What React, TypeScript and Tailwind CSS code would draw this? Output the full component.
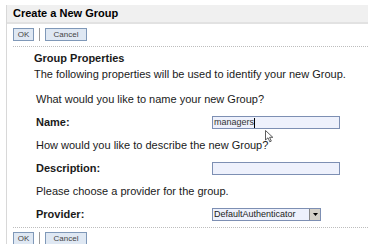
import React from "react";

function Btn({ label, w }: { label: string; w: string }) {
  return (
    <button className={`${w} h-[13px] border border-[#7f98b8] bg-[#dfe8f3] text-[8px] leading-[11px] text-[#444] font-['Liberation_Sans',sans-serif]`}>
      {label}
    </button>
  );
}

function Buttons() {
  return (
    <div className="flex items-center gap-[5px]">
      <Btn label="OK" w="w-[21px]" />
      <div className="w-px h-[13px] bg-[#9a9a9a]" />
      <Btn label="Cancel" w="w-[42px]" />
    </div>
  );
}

export default function App() {
  return (
    <div className="w-[368px] h-[244px] bg-white overflow-hidden font-['Liberation_Sans',sans-serif] text-[11px] text-[#1a1a1a] pt-[5px]">
      <div className="ml-[6px] border-l border-[#d8d8d8] h-full">
        <div className="h-[19px] bg-[#f0f0f0] border-b-2 border-[#e2e2e2] flex items-center pl-[6px] font-bold text-[11px] text-black">
          Create a New Group
        </div>
        <div className="pl-[6px] pt-[4px]">
          <Buttons />
        </div>
        <div className="ml-[6px] mt-[5px] border-t border-dotted border-[#bdbdbd]" />
        <div className="pl-[27px] pt-[3px]">
          <div className="font-bold h-[16px] leading-[16px]">Group Properties</div>
          <div className="h-[16px] leading-[16px]">The following properties will be used to identify your new Group.</div>
          <div className="pl-[2px] pt-[6px]">
            <div className="h-[23px] leading-[23px]">What would you like to name your new Group?</div>
            <div className="flex items-center h-[23px]">
              <div className="w-[176px] font-bold">Name:</div>
              <div className="relative">
                <div className="w-[128px] h-[13px] border border-[#7d8fb3] bg-[#eef1fc] text-[9px] leading-[11px] pl-[1px] text-[#333]">
                  managers<span className="inline-block w-px h-[10px] bg-black align-middle" />
                </div>
                <svg className="absolute left-[53px] top-[14px]" width="9" height="13" viewBox="0 0 9 13">
                  <path d="M0.5 0.5 L0.5 10 L3 7.8 L4.8 11.8 L6.3 11.1 L4.6 7.3 L7.8 7.3 Z" fill="white" stroke="#333" strokeWidth="0.8" />
                </svg>
              </div>
            </div>
            <div className="h-[23px] leading-[23px]">How would you like to describe the new Group?</div>
            <div className="flex items-center h-[23px]">
              <div className="w-[176px] font-bold">Description:</div>
              <div className="w-[128px] h-[13px] border border-[#7d8fb3] bg-[#eef1fc]" />
            </div>
            <div className="h-[23px] leading-[23px]">Please choose a provider for the group.</div>
            <div className="flex items-center h-[23px]">
              <div className="w-[176px] font-bold">Provider:</div>
              <div className="w-[109px] h-[13px] border border-[#7d8fb3] bg-[#eef1fc] flex items-center text-[9px] text-[#222]">
                <span className="flex-1 pl-[1px] leading-[11px]">DefaultAuthenticator</span>
                <span className="w-[11px] h-[11px] bg-[#d4d0c8] border-l border-[#888] flex items-center justify-center">
                  <svg width="5" height="3" viewBox="0 0 5 3"><path d="M0 0 H5 L2.5 3 Z" fill="#000" /></svg>
                </span>
              </div>
            </div>
          </div>
        </div>
        <div className="ml-[6px] mt-[1px] border-t border-dotted border-[#bdbdbd]" />
        <div className="pl-[6px] pt-[4px]">
          <Buttons />
        </div>
      </div>
    </div>
  );
}
